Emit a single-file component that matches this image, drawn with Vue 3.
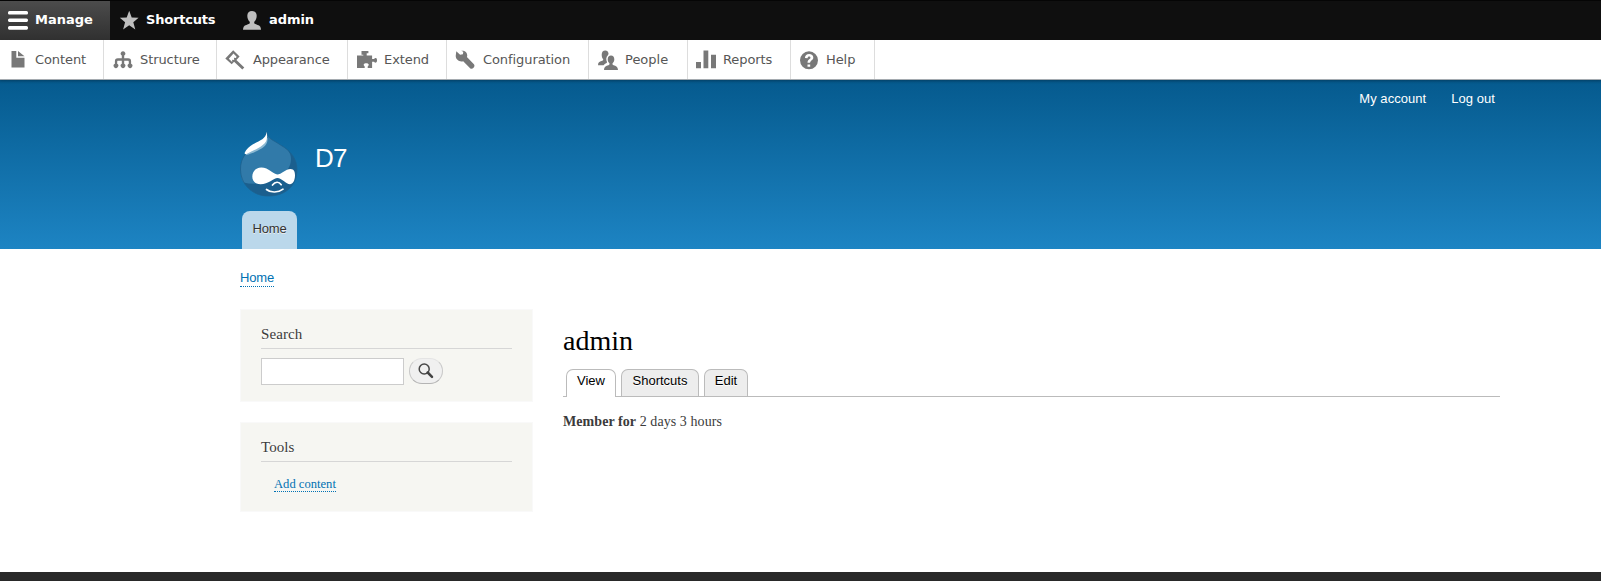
<script setup>
const bar = [
  { label: 'Manage', icon: 'menu', active: true },
  { label: 'Shortcuts', icon: 'star' },
  { label: 'admin', icon: 'person' },
]
const tray = [
  { label: 'Content', icon: 'file' },
  { label: 'Structure', icon: 'tree' },
  { label: 'Appearance', icon: 'brush' },
  { label: 'Extend', icon: 'puzzle' },
  { label: 'Configuration', icon: 'wrench' },
  { label: 'People', icon: 'people' },
  { label: 'Reports', icon: 'chart' },
  { label: 'Help', icon: 'help' },
]
const icons = {
  menu: 'M1.5 1h17a1.5 1.5 0 0 1 1.5 1.5v.7a1.4 1.4 0 0 1-1.5 1.4h-17A1.4 1.4 0 0 1 0 3.2v-.7A1.5 1.5 0 0 1 1.5 1zM1.5 8.5h17A1.5 1.5 0 0 1 20 10v.6a1.4 1.4 0 0 1-1.5 1.4h-17A1.4 1.4 0 0 1 0 10.6V10a1.5 1.5 0 0 1 1.5-1.5zM1.5 16h17a1.5 1.5 0 0 1 1.5 1.5v.8a1.4 1.4 0 0 1-1.5 1.4h-17A1.4 1.4 0 0 1 0 18.3v-.8A1.5 1.5 0 0 1 1.5 16z',
  star: 'M10.2 .8l2.5 6.700 6.900.3-5.300 4.400 2 7.300-6.100-4.200-6.100 4.200 2-7.300L.8 7.800l6.900-.3z',
  person: 'M10 1c2.900 0 4.700 1.900 4.700 4.700 0 2.400-.9 4.600-2.200 5.700-.5.500-.4 1.900.2 2.300 1.500 1 4.400 1 5.600 3 .4.800.7 2 .7 3.100H1c0-1.100.3-2.300.7-3.100 1.200-2 4.100-2 5.600-3 .6-.4.7-1.800.2-2.300C6.200 10.300 5.300 8.100 5.300 5.700 5.300 2.900 7.100 1 10 1z',
  file: 'M3.500 1h4.800v6.700h8.200v9.800h-13zM10 1l6.500 5.300H10z',
  tree: 'M10 1.200a2.300 2.300 0 0 1 1.200 4.300v2.800h3.900c2.200 0 3 1.100 3 3v2.400a2.300 2.300 0 1 1-2.300.1v-1.900c0-.9-.2-1.200-1.100-1.200h-3.500v3a2.300 2.300 0 1 1-2.400 0v-3H5.300c-.9 0-1.100.3-1.100 1.200v1.900a2.300 2.300 0 1 1-2.300-.1v-2.400c0-1.900.8-3 3-3h3.900V5.500A2.300 2.300 0 0 1 10 1.200z',
  brush: 'M.3 8.600L8.200.3l6.400 6.200-3.200 3.400 7.900 7.500-2 2.100-8.200-7.700-2.400 2.400zM3.800 8.800l3.400 3.200-.1-2.200 2.100.2-.2-2.200 1.900.1 .7-1.200-3.100-3.100z',
  puzzle: 'M6.300 4.700H4.500V1h6.900v2.200H9.700v2.400h5.400v3.300h2c.5-.8 1.200-1.100 1.900-.8 1.300.5 1.400 3.900 0 4.500-.8.300-1.400-.1-1.900-.9h-2v6.400h-4.400v-1.600c.9-.6 1.200-1.300 1-2.100-.5-1.700-4.500-1.700-5 0-.2.800.1 1.500 1 2.100v1.600H0V5.600h6.300z',
  wrench: 'M1.300 1.200l3.800 3.600 2.800-.5.400-2.500L6.200.8c4.300-.6 7 2.800 5.700 6.300l7 7.200c1.900 2.200-1.500 5.900-3.800 4L8.200 11.200C4.400 12.500.1 9.300.8 5.200z',
  people: 'M13 5.600c2.100 0 3.300 1.500 3.300 3.700 0 1.700-.6 2.900-1.500 3.700-.6.600-.4 1.500.2 1.900 1.700.7 4.700.7 5 5H6c.2-4.200 3.400-4.300 5-5 .6-.4.8-1.300.2-1.900-.9-.8-1.500-2-1.500-3.700 0-2.200 1.200-3.700 3.300-3.700zM7.300.5c1.900 0 2.900.9 3.200 3.100.1.600-.1 1-.6 1.600-1.900 1.700-2.100 4.300-.8 7-.3 1-2.500 1.400-3.500 3.100H0c0-3 1.500-3.700 3.500-4.200 1.200-.3 2.300-1 1.500-2-.8-.9-1.300-2.400-1.300-4.300C3.700 2 5 .5 7.300.5z',
  chart: 'M0 12h5v6.300H0zM7.500.5h4.800v17.800H7.500zM15 4.700h5v13.600h-5z',
  help: 'M10 1.300a9 9 0 1 1 0 18 9 9 0 0 1 0-18zM8.500 14.500v2.300h2.700v-2.300zM5.900 7.900l2.600.4c.2-1.100.7-1.700 1.600-1.700.8 0 1.400.5 1.400 1.200 0 1.500-3 1.700-3 5h2.600c.1-2.100 3.200-2.500 3.200-5.200 0-2.200-1.700-3.500-4.200-3.500-2.400 0-4 1.300-4.200 3.800z',
}
const tabs = ['View', 'Shortcuts', 'Edit']
</script>

<template>
  <div class="page">
    <nav class="toolbar">
      <a v-for="item in bar" :key="item.label" class="bar-item" :class="{ active: item.active }">
        <svg class="icon" viewBox="0 0 20 20"><path fill-rule="evenodd" :d="icons[item.icon]" /></svg>
        <span>{{ item.label }}</span>
      </a>
    </nav>
    <nav class="tray">
      <a v-for="item in tray" :key="item.label" class="tray-item" :class="item.icon">
        <svg class="icon" viewBox="0 0 20 20"><path fill-rule="evenodd" :d="icons[item.icon]" /></svg>
        <span>{{ item.label }}</span>
      </a>
    </nav>

    <header class="header">
      <div class="account"><a>My account</a><a>Log out</a></div>
      <div class="brand">
        <svg class="logo" viewBox="0 0 58 66">
          <path fill="#1b5f8e" d="M26.500 1c1 7 7 8 14 13C51 20 57 28 57 39c0 16-12 26-28.500 26S.5 53 .5 38c0-10 5-17 13-22C20.500 11 25.500 10 26.500 1z" />
          <path fill="#317aa9" d="M26.500 1c1 7 7 8 14 13 7.500 4 10.500 8 10.500 14 0 8-5 14-13 18-9 5-22 9-34.500 5.500C1.300 48 .5 44 .5 38c0-10 5-17 13-22C20.500 11 25.500 10 26.500 1z" />
          <path fill="none" stroke="#1d628f" stroke-width=".8" d="M26.500 1c1 7 7 8 14 13C51 20 57 28 57 39c0 16-12 26-28.500 26S.5 53 .5 38c0-10 5-17 13-22C20.500 11 25.500 10 26.500 1z" />
          <path fill="#8bb9d3" d="M27.500 7c.5 6-3 9.500-9.500 12.500-5 2.300-8 3.500-12 4.500l-.5-2 9-6z" />
          <path fill="#fff" d="M26.700 .8c1 7 .3 9.700-4 13.200C17.500 18.200 12.500 19.500 7.500 22.500c-2 1-3.300.6-2.700-1C6 18.500 9.500 15.500 13 13.300 19.500 9.500 25.800 8.500 26.700.8z" />
          <path fill="#fff" d="M12.300 45.500c0-5.500 4-8.900 9-8.900 7.500 0 12 6.900 16 6.900 3.800 0 8.500-5.500 13.200-5.500 3.600 0 4.500 3 4.500 6.200 0 5.200-2.200 9-5 9-3.800 0-8.500-6.200-12.500-6.200s-9 6.300-17 6.300c-5 0-8.200-3.200-8.200-7.800z" />
          <path fill="none" stroke="#fff" stroke-width="1.700" stroke-linecap="round" d="M32.500 54c2.700-3.600 6.500-3.600 8.700-.3M26.500 58.500c4 3.500 12 3.300 16.500-.3" />
        </svg>
        <span class="site-name">D7</span>
      </div>
      <a class="home-tab">Home</a>
    </header>

    <main class="main">
      <div class="breadcrumb"><a>Home</a></div>
      <div class="columns">
        <aside class="sidebar">
          <section class="block search-block">
            <h2>Search</h2>
            <div class="search">
              <input type="text" aria-label="Search" />
              <button aria-label="Submit search">
                <svg viewBox="0 0 16 16"><circle cx="6.200" cy="6" r="5" fill="none" stroke="#484848" stroke-width="1.500" /><path d="M9.700 9.500l4.300 4.300" stroke="#424242" stroke-width="2.500" stroke-linecap="round" /></svg>
              </button>
            </div>
          </section>
          <section class="block tools-block">
            <h2>Tools</h2>
            <div class="links"><a>Add content</a></div>
          </section>
        </aside>
        <article class="content">
          <h1>admin</h1>
          <div class="tabs">
            <a v-for="(tab, i) in tabs" :key="tab" :class="{ current: i === 0 }">{{ tab }}</a>
          </div>
          <p><b>Member for</b> 2 days 3 hours</p>
        </article>
      </div>
    </main>
    <footer class="footer"></footer>
  </div>
</template>

<style>
body { margin: 0; }
</style>

<style scoped>
* { box-sizing: border-box; }
.page { width: 1601px; height: 581px; overflow: hidden; display: flex; flex-direction: column; background: #fff; }
.toolbar, .tray { flex: none; font: 13px/20px "DejaVu Sans", sans-serif; position: relative; letter-spacing: -.08px; }
.toolbar { display: flex; height: 40px; background: #0f0f0f; border-top: 1px solid #050505; color: #fff; font-weight: bold; }
.bar-item, .tray-item { display: flex; align-items: center; gap: 7px; }
.bar-item { padding: 0 17.300px 2px 8px; }
.bar-item.active { width: 110px; letter-spacing: 0; background: linear-gradient(#4c4c4c, #303030); }
.bar-item + .bar-item { padding-left: 9px; }
.bar-item:nth-child(2) { width: 123px; letter-spacing: -.2px; }
.icon { width: 20px; height: 20px; display: block; flex: none; fill: #bebebe; }
.active .icon { fill: #fff; }
.tray { display: grid; grid-template-columns: 104px 113px 131px 99px 142px 99px 103px 84px; height: 40px; background: #fff; color: #565656; border-bottom: 1px solid #a5abb0; box-shadow: 0 0 3px 1px rgba(0, 0, 0, .33); z-index: 1; clip-path: inset(0 0 -8px 0); }
.tray-item { padding-left: 9px; border-right: 1px solid #ddd; }
.tray-item.file, .tray-item.chart, .tray-item.help { padding-left: 8px; }
.tray-item.brush, .tray-item.wrench { padding-left: 8px; gap: 8px; }
.tray-item.brush { letter-spacing: -.15px; }
.tray-item.people { letter-spacing: 0; }
.tray-item .icon { fill: #787878; }
.header { flex: none; height: 169px; padding: 0 106px 0 240px; background: linear-gradient(#055a8e, #1d84c3); font-family: "Liberation Sans", sans-serif; color: #fff; display: flex; flex-direction: column; align-items: flex-start; }
.account { align-self: flex-end; display: flex; gap: 25px; font-size: 13px; line-height: 18px; padding-top: 10px; height: 51px; letter-spacing: .05px; }
.brand { display: flex; height: 80px; }
.logo { width: 58px; height: 66px; display: block; }
.site-name { margin-left: 17px; font-size: 26px; line-height: 30px; padding-top: 12px; letter-spacing: -.8px; }
.home-tab { margin-left: 2px; width: 55px; height: 38px; line-height: 35px; text-align: center; font-size: 13px; letter-spacing: -.2px; color: #333; text-shadow: 0 1px #eee; background: #bbd8eb; border-radius: 8px 8px 0 0; }
.main { height: 323px; flex: none; padding: 20px 101px 0 240px; color: #3b3b3b; }
.breadcrumb { font: 13px/18px "Liberation Sans", sans-serif; height: 40px; letter-spacing: -.15px; }
.breadcrumb a, .links a { color: #0071b3; border-bottom: 1px dotted #0071b3; }
.breadcrumb a { padding-bottom: 1px; }
.columns { display: flex; gap: 30px; font-family: "Liberation Serif", serif; }
.sidebar { width: 293px; display: flex; flex-direction: column; gap: 20px; }
.block { background: #f6f6f2; border: 1px solid #f9f9f9; padding: 15px 20px 0 20px; }
.search-block { height: 93px; }
.tools-block { height: 90px; }
.block h2 { margin: 0; font-size: 15px; font-weight: normal; line-height: 19px; height: 24px; border-bottom: 1px solid #d6d6d6; color: #3b3b3b; text-shadow: 0 1px 0 #fff; }
.block h2 { letter-spacing: .08px; }
.search { display: flex; gap: 5px; margin-top: 9px; }
.search input { width: 143px; height: 27px; border: 1px solid #ccc; background: #fff; padding: 2px; }
.search button { width: 34px; height: 26px; border: 1px solid #c8c8c8; border-top-color: #e4e4e4; border-bottom-color: #b4b4b4; border-radius: 13px; background: #f0f0f0; padding: 0; display: flex; align-items: center; justify-content: center; }
.search button svg { width: 16px; height: 16px; display: block; margin-top: -1px; }
.links { padding: 13px 0 0 13px; font-size: 12.600px; line-height: 18px; }
.content { flex: 1; padding-top: 15px; }
h1 { margin: 0; font-size: 28px; font-weight: normal; line-height: 34px; color: #000; height: 45px; }
.tabs { display: grid; grid-template-columns: 50px 78px 44px; gap: 5px; height: 28px; padding-left: 3px; border-bottom: 1px solid #bbb; font: 13px/22px "Liberation Sans", sans-serif; color: #000; }
.tabs a { height: 27px; text-align: center; border: 1px solid #bbb; border-bottom: 0; border-radius: 7px 7px 0 0; background: #ededed; text-shadow: 0 1px #fff; }
.tabs a.current { height: 28px; background: #fff; }
p { margin: 15px 0 0; font-size: 14px; line-height: 20px; letter-spacing: .07px; }
.footer { flex: none; height: 9px; background: #292929; }
</style>
